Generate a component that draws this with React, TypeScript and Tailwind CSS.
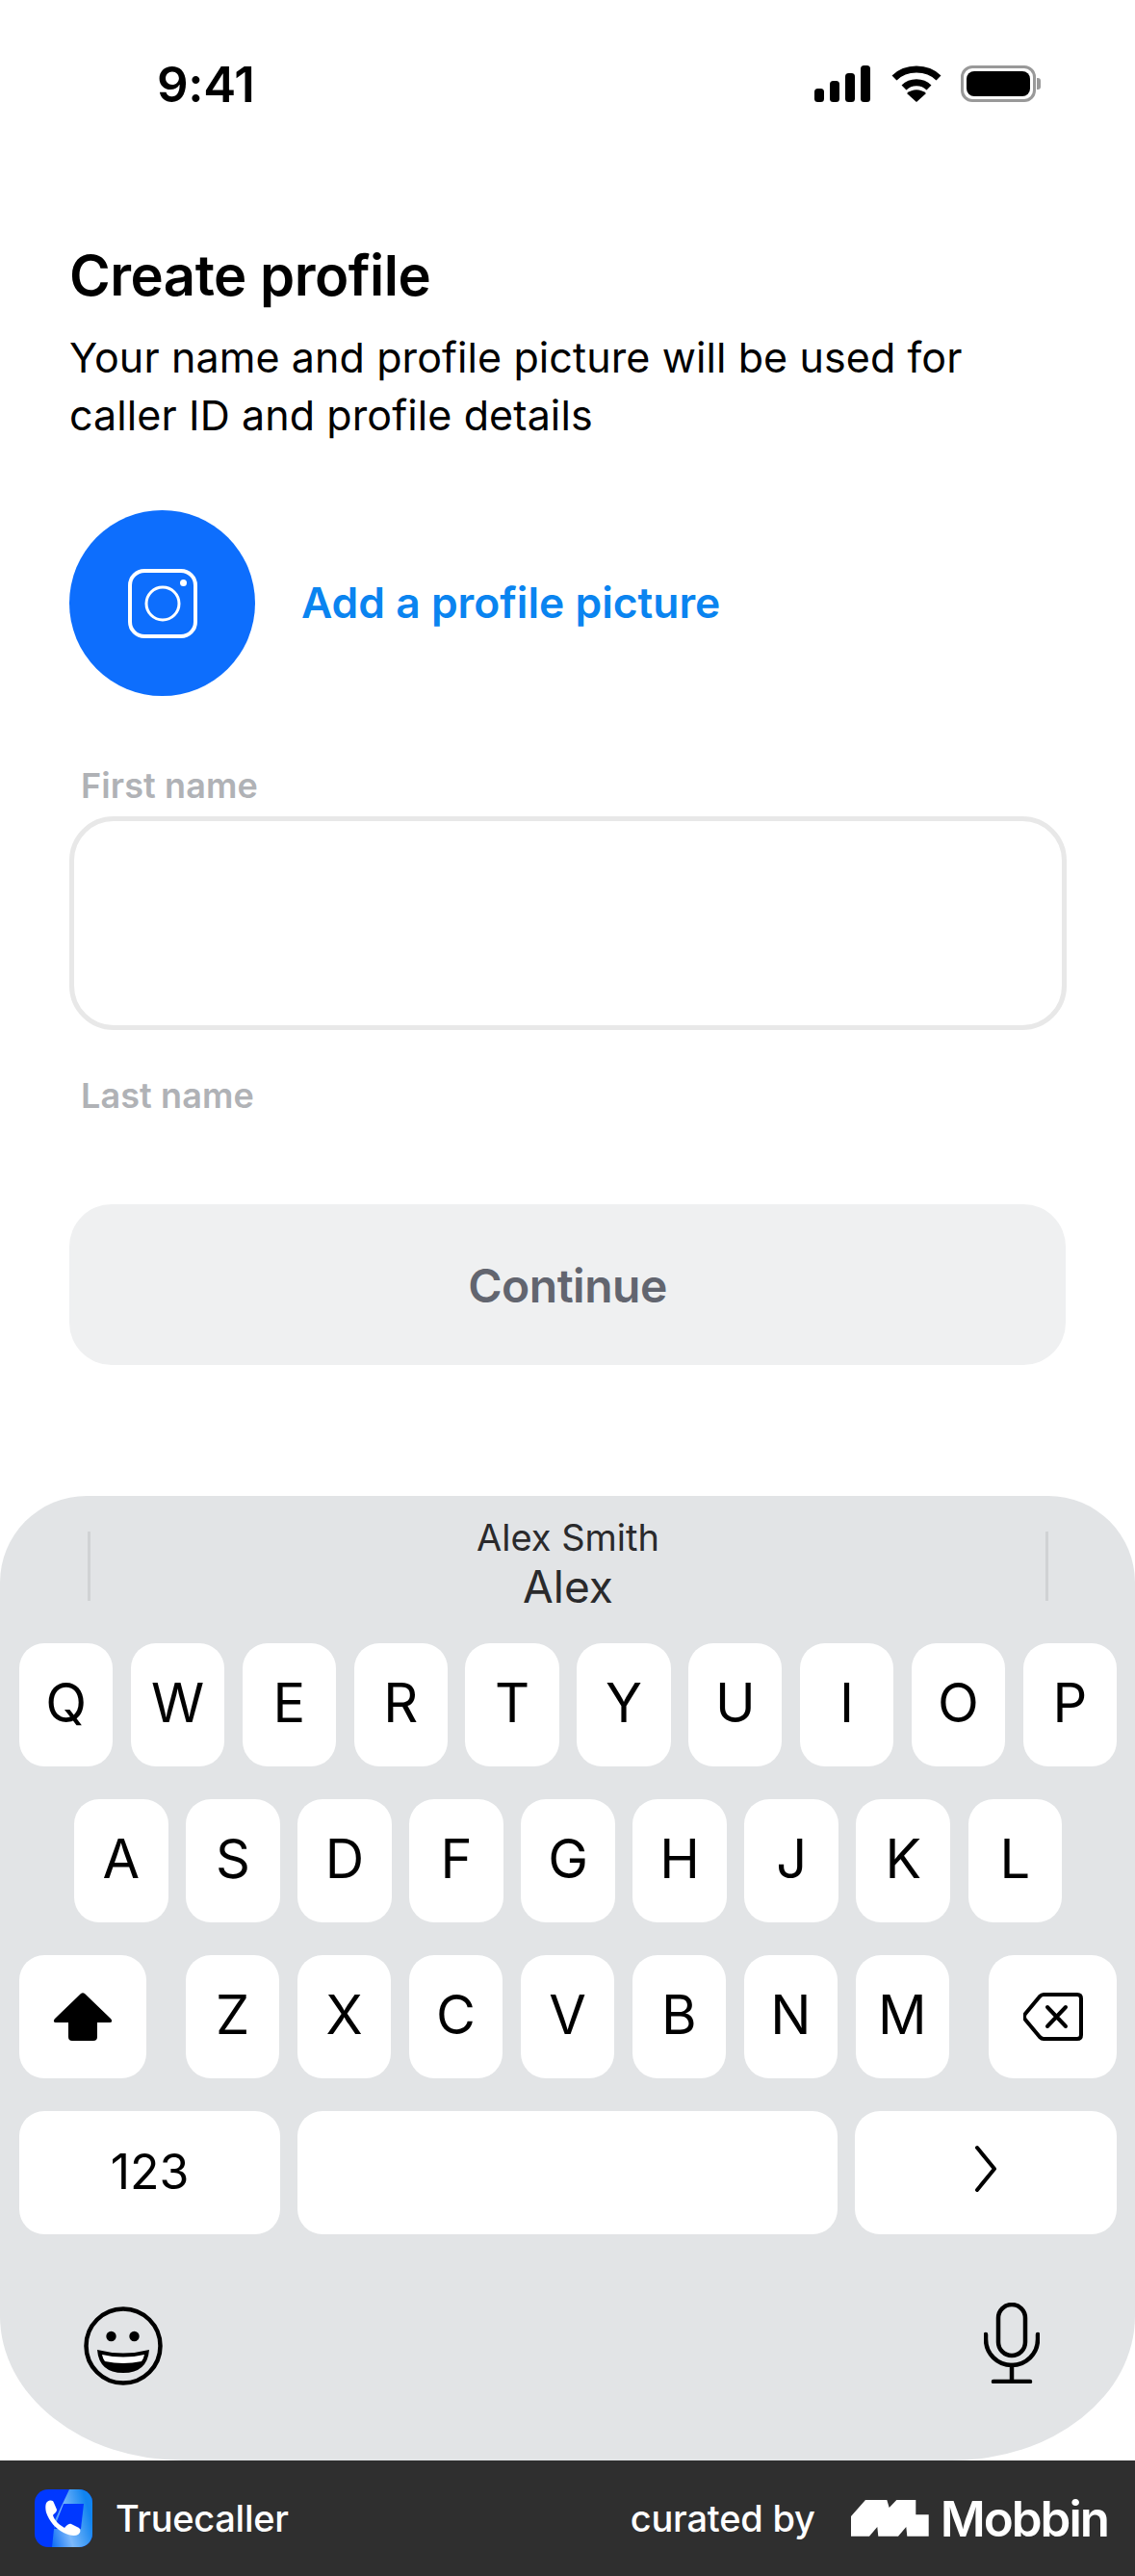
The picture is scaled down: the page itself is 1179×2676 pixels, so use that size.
import React from "react";

const rowOne = ["Q", "W", "E", "R", "T", "Y", "U", "I", "O", "P"];
const rowTwo = ["A", "S", "D", "F", "G", "H", "J", "K", "L"];
const rowThree = ["Z", "X", "C", "V", "B", "N", "M"];

function Key({ label }: { label: string }) {
  return (
    <div className="flex h-[128px] flex-1 items-center justify-center rounded-[26px] bg-white pb-[4px] text-[56px] leading-none text-black">
      {label}
    </div>
  );
}

function StatusIcons() {
  return (
    <div className="flex items-center gap-[20px]">
      <svg width="60" height="38" viewBox="0 0 60 38" fill="black">
        <rect x="0" y="24" width="10" height="14" rx="3.5" />
        <rect x="16" y="16" width="10" height="22" rx="3.5" />
        <rect x="32" y="8" width="10" height="30" rx="3.5" />
        <rect x="48" y="0" width="10" height="38" rx="3.5" />
      </svg>
      <svg width="52" height="38" viewBox="0 0 52 38" fill="none" stroke="black" strokeWidth="7">
        <path d="M3 13 C15 1 37 1 49 13" />
        <path d="M13 23 C20 16 32 16 39 23" />
        <path d="M16 29 L26 38 L36 29 C30 24 22 24 16 29 Z" fill="black" stroke="none" />
      </svg>
      <div className="flex items-center">
        <div className="flex h-[38px] w-[78px] items-center justify-center rounded-[12px] border-[3px] border-[#999999] bg-white">
          <div className="h-[26px] w-[66px] rounded-[8px] bg-black" />
        </div>
        <div className="ml-[1px] h-[12px] w-[4px] rounded-r-[3px] bg-[#999999]" />
      </div>
    </div>
  );
}

function CameraGlyph() {
  return (
    <svg width="72" height="72" viewBox="0 0 72 72" fill="none" stroke="white">
      <rect x="2" y="2" width="68" height="68" rx="15" strokeWidth="4" />
      <circle cx="36" cy="36" r="17" strokeWidth="3" />
      <circle cx="57.5" cy="14.5" r="3.5" fill="white" stroke="none" />
    </svg>
  );
}

function TruecallerLogo() {
  return (
    <svg width="60" height="60" viewBox="0 0 60 60">
      <defs>
        <linearGradient id="tcGrad" x1="0" y1="1" x2="1" y2="0.6">
          <stop offset="0" stopColor="#0b6cf5" />
          <stop offset="0.45" stopColor="#7db9fa" />
          <stop offset="1" stopColor="#1184f0" />
        </linearGradient>
      </defs>
      <rect width="60" height="60" rx="14" fill="#0038ff" />
      <path d="M36 0 H46 A14 14 0 0 1 60 14 V46 A14 14 0 0 1 46 60 H18 L21 32 Z" fill="url(#tcGrad)" />
      <path d="M30 15 H51 L48 41 H20 Z" fill="#0038ff" />
      <path d="M13 13 C16 11 19 11 20 14 L23 21 C23 24 20 25 19 27 C21 33 26 37 31 40 C33 38 35 35 38 36 L46 40 C48 42 48 45 45 47 C42 49 36 48 30 45 C22 41 15 33 12 24 C11 19 11 15 13 13 Z" fill="white" />
    </svg>
  );
}

function MobbinMark() {
  return (
    <svg width="81" height="38" viewBox="0 0 81 38" fill="white">
      <path d="M0 17 L15 0 H37.3 L39.7 8 L47.3 0 H67.3 V15.3 H80.7 V37.7 H58.3 L57.3 28 L49 37.7 H28.3 L27.3 28 L19 37.7 H0 Z" />
    </svg>
  );
}

export default function App() {
  return (
    <div className="flex h-[2676px] w-[1179px] flex-col overflow-hidden bg-white font-['Inter',sans-serif]">
      <div className="flex h-[174px] items-center justify-between pl-[163px] pr-[98px]">
        <span className="text-[51px] font-semibold leading-none tracking-[-0.3px] text-black">9:41</span>
        <StatusIcons />
      </div>

      <main className="flex flex-1 flex-col px-[72px] pt-[78px]">
        <h1 className="text-[58px] font-semibold leading-[68px] tracking-[-0.5px] text-black">Create profile</h1>
        <p className="mt-[21px] text-[43px] leading-[60px] tracking-[0.1px] text-black">
          Your name and profile picture will be used for
          <br />
          caller ID and profile details
        </p>

        <div className="mt-[69px] flex items-center gap-[48px]">
          <div className="flex h-[193px] w-[193px] items-center justify-center rounded-full bg-[#0d6efd]">
            <CameraGlyph />
          </div>
          <span className="text-[44.4px] font-semibold leading-none text-[#0a84f0]">Add a profile picture</span>
        </div>

        <label className="ml-[12px] mt-[71px] text-[36px] font-semibold leading-[44px] tracking-[0.1px] text-[#b0b2b6]">First name</label>
        <div className="mt-[10px] h-[222px] w-[1036px] rounded-[46px] border-[5px] border-[#e8e8e8] bg-white" />
        <label className="ml-[12px] mt-[46px] text-[36px] font-semibold leading-[44px] tracking-[0.1px] text-[#b0b2b6]">Last name</label>

        <button className="mt-[91px] flex h-[167px] w-[1035px] items-center justify-center rounded-[44px] bg-[#eff0f1] pt-[2px] text-[48px] font-semibold tracking-[-0.5px] text-[#62656f]">
          Continue
        </button>
      </main>

      <section className="flex h-[1002px] w-[1179px] flex-col rounded-t-[90px] rounded-bl-[190px_150px] rounded-br-[190px_150px] bg-[#e2e4e6] pl-[20px] pr-[19px]">
        <div className="flex h-[153px] items-start justify-between px-[71px] pt-[20px]">
          <div className="mt-[17px] h-[72px] w-[3px] bg-[#d0d2d4]" />
          <div className="flex flex-col items-center text-[#2a2a2c]">
            <span className="text-[38px] leading-[46px]">Alex Smith</span>
            <span className="text-[46px] leading-[56px]">Alex</span>
          </div>
          <div className="mt-[17px] h-[72px] w-[3px] bg-[#d0d2d4]" />
        </div>

        <div className="flex flex-col gap-[34px]">
          <div className="flex gap-[18.5px]">
            {rowOne.map((k) => (
              <Key key={k} label={k} />
            ))}
          </div>
          <div className="flex gap-[18.5px] px-[57px]">
            {rowTwo.map((k) => (
              <Key key={k} label={k} />
            ))}
          </div>
          <div className="flex items-center">
            <div className="flex h-[128px] w-[132px] items-center justify-center rounded-[26px] bg-white">
              <svg width="62" height="50" viewBox="0 0 62 50" fill="black">
                <path d="M29 1 Q31 -0.5 33 1 L60 27 Q63 31 58 31 H46 V46 Q46 50 42 50 H20 Q16 50 16 46 V31 H4 Q-1 31 2 27 Z" />
              </svg>
            </div>
            <div className="mx-[41px] flex flex-1 gap-[18.5px]">
              {rowThree.map((k) => (
                <Key key={k} label={k} />
              ))}
            </div>
            <div className="flex h-[128px] w-[133px] items-center justify-center rounded-[26px] bg-white">
              <svg width="62" height="50" viewBox="0 0 62 50" fill="none" stroke="black" strokeWidth="4" strokeLinecap="round" strokeLinejoin="round">
                <path d="M21 2 H56 Q60 2 60 6 V44 Q60 48 56 48 H21 Q19 48 17 46 L2 28 Q0 25 2 22 L17 4 Q19 2 21 2 Z" />
                <path d="M25 15 L44 35 M44 15 L25 35" />
              </svg>
            </div>
          </div>
          <div className="flex gap-[18px]">
            <div className="flex h-[128px] w-[271px] items-center justify-center rounded-[26px] bg-white pb-[2px] text-[50px] text-black">123</div>
            <div className="h-[128px] flex-1 rounded-[26px] bg-white" />
            <div className="flex h-[128px] w-[272px] items-center justify-center rounded-[26px] bg-white pb-[8px]">
              <svg width="24" height="50" viewBox="0 0 24 50" fill="none" stroke="black" strokeWidth="4" strokeLinecap="round" strokeLinejoin="round">
                <path d="M3 3 L21 25 L3 47" />
              </svg>
            </div>
          </div>
        </div>

        <div className="flex items-start justify-between pl-[67px] pr-[80px] pt-[68px]">
          <svg className="mt-[7px]" width="82" height="82" viewBox="0 0 82 82" fill="none">
            <circle cx="41" cy="41" r="38.5" stroke="black" strokeWidth="4.5" />
            <circle cx="28.5" cy="31" r="5.2" fill="black" />
            <circle cx="52.5" cy="31" r="5.2" fill="black" />
            <path d="M14 45 Q41 52 68 45 Q66 69 41 69 Q16 69 14 45 Z" fill="black" />
            <path d="M19 50 Q41 55 63 50 Q62 55 60 57 Q41 61 22 57 Q20 55 19 50 Z" fill="white" />
          </svg>
          <svg className="mt-[3px]" width="58" height="84" viewBox="0 0 58 84" fill="none" stroke="black" strokeWidth="4.5" strokeLinecap="round">
            <rect x="15" y="2" width="28" height="53" rx="14" />
            <path d="M2 33 V38 C2 53 14 65 29 65 C44 65 56 53 56 38 V33" />
            <path d="M29 65 V82 M10 82 H48" />
          </svg>
        </div>
      </section>

      <footer className="flex h-[120px] items-center justify-between bg-[#2f2f2f] pl-[36px] pr-[28px]">
        <div className="flex items-center gap-[24px]">
          <TruecallerLogo />
          <span className="text-[38px] font-medium tracking-[-0.3px] text-white">Truecaller</span>
        </div>
        <div className="flex items-center">
          <span className="mr-[37px] text-[38px] font-medium tracking-[-0.2px] text-white">curated by</span>
          <MobbinMark />
          <span className="ml-[12px] text-[51px] font-semibold leading-none tracking-[-2px] text-white">Mobbin</span>
        </div>
      </footer>
    </div>
  );
}
